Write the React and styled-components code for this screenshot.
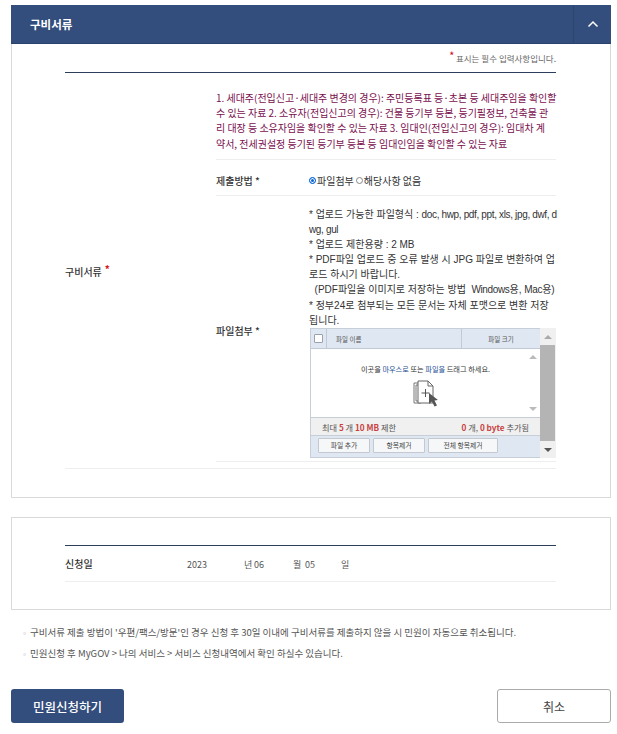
import React from 'react'
import styled, { createGlobalStyle } from 'styled-components'

const Global = createGlobalStyle`
  html, body { margin: 0; padding: 0; background: #fff; }
  body { font-family: "Noto Sans CJK KR", "Noto Sans", sans-serif; color: #333; }
  * { box-sizing: border-box; }
`

const Page = styled.div`
  width: 617px;
  height: 734px;
  overflow: hidden;
  padding: 5px 6px 0 11px;
`
const Header = styled.div`
  height: 39px;
  background: #334d7c;
  border-bottom: 1px solid #2b4270;
  display: flex;
  align-items: center;
  justify-content: space-between;
`
const HeaderTitle = styled.h2`
  margin: 0 0 0 19px;
  font-size: 11.5px;
  font-weight: 700;
  color: #fff;
`
const Toggle = styled.div`
  width: 38px;
  height: 38px;
  border-left: 1px solid #2d446f;
  display: flex;
  align-items: center;
  justify-content: center;
`
const PanelBody = styled.div`
  height: 454px;
  border: 1px solid #d9d9d9;
  border-top: 0;
  padding: 5px 54px 0 53px;
`
const Required = styled.p`
  margin: 0;
  height: 23px;
  text-align: right;
  font-size: 8.5px;
  line-height: 13px;
  color: #666;
`
const Star = styled.span`
  color: #d3172a;
  font-size: 9px;
  font-weight: 700;
  vertical-align: 3px;
  margin-right: 2px;
`
const LabelStar = styled(Star)`
  margin: 0 0 7px 1px;
  font-size: 10px;
`
const FormRow = styled.div`
  border-top: 1px solid #2c3e5a;
  border-bottom: 1px solid #eee;
  display: grid;
  grid-template-columns: 151px 340px;
  height: 397px;
`
const RowLabel = styled.div`
  display: flex;
  align-items: center;
  gap: 2px;
  padding-top: 2px;
  font-size: 10px;
  font-weight: 500;
  color: #333;
`
const Guide = styled.div`
  padding: 17px 0 6px;
  height: 87px;
  border-bottom: 1px solid #eee;
  color: #7a0f4f;
  font-size: 10px;
  line-height: 15.2px;
  letter-spacing: -0.02px;
  white-space: nowrap;
`
const SubmitRow = styled.div`
  height: 36px;
  border-bottom: 1px solid #eee;
  display: grid;
  grid-template-columns: 93px 1fr;
  align-items: center;
  padding-top: 5px;
  font-size: 10px;
`
const FileRow = styled.div`
  height: 266px;
  border-bottom: 1px solid #eee;
  display: grid;
  grid-template-columns: 93px 1fr;
  font-size: 10px;
`
const FieldName = styled.span`
  font-weight: 500;
  color: #333;
`
const FileName = styled(FieldName)`
  align-self: center;
  padding-top: 4px;
`
const Radios = styled.div`
  display: flex;
  align-items: center;
  color: #333;
`
const Radio = styled.span`
  width: 7px;
  height: 7px;
  border-radius: 50%;
  margin-right: 1px;
  margin-left: ${p => (p.$on ? 0 : 2)}px;
  border: 1px solid ${p => (p.$on ? '#0a66d8' : '#888')};
  background: ${p => (p.$on ? '#0a66d8' : '#fff')};
  box-shadow: ${p => (p.$on ? 'inset 0 0 0 1px #fff' : 'none')};
`
const FileInfo = styled.div`
  padding-top: 11px;
`
const InfoText = styled.p`
  margin: 0 0 3px;
  height: 118px;
  font-family: "Liberation Sans", "Noto Sans CJK KR", sans-serif;
  font-size: 10px;
  line-height: 15.1px;
  color: #333;
  white-space: pre;
`
const Latin = styled.span`
  letter-spacing: -0.35px;
`
const Uploader = styled.div`
  margin-left: 1px;
  width: 246px;
  height: 130px;
  display: flex;
  font-size: 6.5px;
  color: #555;
`
const UploadMain = styled.div`
  width: 230px;
  display: flex;
  flex-direction: column;
  background: #dfe7f2;
  border: 1px solid #c6ced8;
  border-right: 0;
`
const TableHead = styled.div`
  height: 20px;
  display: grid;
  grid-template-columns: 15px 135px 1fr;
  align-items: center;
  border-bottom: 1px solid #c2cad6;
`
const HeadCell = styled.div`
  height: 100%;
  display: flex;
  align-items: center;
  justify-content: ${p => (p.$center ? 'center' : 'flex-start')};
  padding-left: ${p => (p.$center ? 0 : 9)}px;
  border-left: ${p => (p.$line ? '1px solid #c2cad6' : '0')};
`
const Check = styled.span`
  width: 9px;
  height: 9px;
  margin-left: 3px;
  background: #fff;
  border: 1px solid #9aa3ad;
  border-radius: 1px;
`
const DropArea = styled.div`
  height: 69px;
  background: #fff;
  display: flex;
  border-bottom: 1px solid #c6ced8;
`
const DropText = styled.div`
  flex: 1;
  display: flex;
  flex-direction: column;
  align-items: center;
  padding: 15px 0 0 14px;
  color: #333;
  font-size: 7.2px;
  line-height: 10px;
`
const Blue = styled.span`
  color: #1c4f96;
`
const DropIcon = styled.svg`
  margin-top: 6px;
`
const MiniBar = styled.div`
  width: 14px;
  display: flex;
  flex-direction: column;
  align-items: center;
  justify-content: space-between;
  padding: 6px 0;
`
const Limits = styled.div`
  height: 18px;
  border-bottom: 1px solid #c6ced8;
  background: #f0f0f0;
  display: flex;
  align-items: center;
  justify-content: space-between;
  padding: 0 11px;
  font-size: 8.2px;
`
const Red = styled.b`
  color: #c9413f;
`
const Actions = styled.div`
  flex: 1;
  display: flex;
  align-items: center;
  gap: 3px;
  padding: 0 0 3px 7px;
`
const MiniButton = styled.button`
  width: ${p => p.$w}px;
  height: 15px;
  padding: 0;
  background: #f6f7f9;
  border: 1px solid #c4c9d0;
  border-radius: 1px;
  font: inherit;
  font-size: 6.8px;
  color: #444;
`
const Scroll = styled.div`
  width: 16px;
  display: flex;
  flex-direction: column;
  background: #f0f0f0;
`
const ScrollEnd = styled.div`
  height: 17px;
  display: flex;
  align-items: center;
  justify-content: center;
`
const Thumb = styled.div`
  flex: 1;
  margin: 0 1px 0 0;
  background: #b4b4b4;
`
const Tri = styled.span`
  width: 0;
  height: 0;
  border-left: 4px solid transparent;
  border-right: 4px solid transparent;
  ${p => (p.$down ? `border-top: 4px solid ${p.$c}` : `border-bottom: 4px solid ${p.$c}`)};
`
const DateCard = styled.div`
  margin-top: 19px;
  height: 93px;
  border: 1px solid #d9d9d9;
  padding: 27px 54px 0 53px;
`
const DateRow = styled.div`
  height: 37px;
  border-top: 1px solid #2c3e5a;
  border-bottom: 1px solid #eee;
  display: flex;
  align-items: center;
  font-size: 10px;
`
const DateLabel = styled.span`
  width: 122px;
  font-weight: 500;
`
const DatePart = styled.span`
  width: ${p => p.$w}px;
  font-size: 9px;
  color: #555;
  padding-top: 2px;
`
const Notes = styled.ul`
  list-style: none;
  margin: 12px 0 0;
  padding: 0 0 0 10px;
  font-size: 9.5px;
  line-height: 20px;
  color: #555;
`
const Note = styled.li`
  &::before {
    content: '▫';
    color: #999;
    font-size: 7px;
    margin-right: 2px;
  }
`
const Buttons = styled.div`
  margin-top: 25px;
  display: flex;
  justify-content: space-between;
`
const Submit = styled.button`
  width: 113px;
  height: 34px;
  background: #334d7c;
  border: 0;
  border-radius: 3px;
  color: #fff;
  font: inherit;
  font-size: 12.5px;
  font-weight: 500;
`
const Cancel = styled.button`
  width: 114px;
  height: 34px;
  background: #fff;
  border: 1px solid #aaa;
  border-radius: 3px;
  color: #444;
  font: inherit;
  font-size: 12px;
`

const App = () => {
  return (
    <Page>
      <Global />
      <Header>
        <HeaderTitle>구비서류</HeaderTitle>
        <Toggle>
          <svg width="12" height="8" viewBox="0 0 12 8" fill="none">
            <path d="M1.5 6.5 6 2l4.5 4.5" stroke="#fff" strokeWidth="1.5" />
          </svg>
        </Toggle>
      </Header>
      <PanelBody>
        <Required><Star>*</Star>표시는 필수 입력사항입니다.</Required>
        <FormRow>
          <RowLabel>구비서류<LabelStar>*</LabelStar></RowLabel>
          <div>
            <Guide>
              1. 세대주(전입신고·세대주 변경의 경우): 주민등록표 등·초본 등 세대주임을 확인할<br />
              수 있는 자료 2. 소유자(전입신고의 경우): 건물 등기부 등본, 등기필정보, 건축물 관<br />
              리 대장 등 소유자임을 확인할 수 있는 자료 3. 임대인(전입신고의 경우): 임대차 계<br />
              약서, 전세권설정 등기된 등기부 등본 등 임대인임을 확인할 수 있는 자료
            </Guide>
            <SubmitRow>
              <FieldName>제출방법 *</FieldName>
              <Radios>
                <Radio $on />파일첨부<Radio />해당사항 없음
              </Radios>
            </SubmitRow>
            <FileRow>
              <FileName>파일첨부 *</FileName>
              <FileInfo>
                <InfoText>
                  * 업로드 가능한 파일형식 : <Latin>doc, hwp, pdf, ppt, xls, jpg, dwf, d</Latin>{'\n'}
                  <Latin>wg, gul</Latin>{'\n'}
                  * 업로드 제한용량 : 2 MB{'\n'}
                  * PDF파일 업로드 중 오류 발생 시 JPG 파일로 변환하여 업{'\n'}
                  로드 하시기 바랍니다.{'\n'}
                  {'  '}(PDF파일을 이미지로 저장하는 방법  <Latin>Windows</Latin>용, <Latin>Mac</Latin>용){'\n'}
                  * 정부24로 첨부되는 모든 문서는 자체 포맷으로 변환 저장{'\n'}
                  됩니다.
                </InfoText>
                <Uploader>
                  <UploadMain>
                    <TableHead>
                      <Check />
                      <HeadCell $line>파일 이름</HeadCell>
                      <HeadCell $line $center>파일 크기</HeadCell>
                    </TableHead>
                    <DropArea>
                      <DropText>
                        <span>이곳을 <Blue>마우스로</Blue> 또는 <Blue>파일을</Blue> 드래그 하세요.</span>
                        <DropIcon width="26" height="28" viewBox="0 0 26 28">
                          <path d="M1 3h10l0 2H3v16h5v2H1z" fill="#fff" stroke="#777" />
                          <path d="M5 1h10l5 5v17H5z" fill="#fff" stroke="#666" />
                          <path d="M15 1v5h5" fill="none" stroke="#666" />
                          <path d="M12.5 9v8M8.5 13h8" stroke="#555" />
                          <path d="M16 13l0 11 3-2.5 2.5 5 2.5-1-2.5-5 3.5-.5z" fill="#555" />
                        </DropIcon>
                      </DropText>
                      <MiniBar>
                        <Tri $c="#bbb" />
                        <Tri $down $c="#bbb" />
                      </MiniBar>
                    </DropArea>
                    <Limits>
                      <span>최대 <Red>5</Red> 개 <Red>10 MB</Red> 제한</span>
                      <span><Red>0</Red> 개, <Red>0 byte</Red> 추가됨</span>
                    </Limits>
                    <Actions>
                      <MiniButton $w={52}>파일 추가</MiniButton>
                      <MiniButton $w={52}>항목제거</MiniButton>
                      <MiniButton $w={70}>전체 항목제거</MiniButton>
                    </Actions>
                  </UploadMain>
                  <Scroll>
                    <ScrollEnd><Tri $c="#aaa" /></ScrollEnd>
                    <Thumb />
                    <ScrollEnd><Tri $down $c="#555" /></ScrollEnd>
                  </Scroll>
                </Uploader>
              </FileInfo>
            </FileRow>
          </div>
        </FormRow>
      </PanelBody>
      <DateCard>
        <DateRow>
          <DateLabel>신청일</DateLabel>
          <DatePart $w={57}>2023</DatePart>
          <DatePart $w={10}>년</DatePart>
          <DatePart $w={39}>06</DatePart>
          <DatePart $w={12}>월</DatePart>
          <DatePart $w={36}>05</DatePart>
          <DatePart $w={20}>일</DatePart>
        </DateRow>
      </DateCard>
      <Notes>
        <Note>구비서류 제출 방법이 '우편/팩스/방문'인 경우 신청 후 30일 이내에 구비서류를 제출하지 않을 시 민원이 자동으로 취소됩니다.</Note>
        <Note>민원신청 후 MyGOV &gt; 나의 서비스 &gt; 서비스 신청내역에서 확인 하실수 있습니다.</Note>
      </Notes>
      <Buttons>
        <Submit>민원신청하기</Submit>
        <Cancel>취소</Cancel>
      </Buttons>
    </Page>
  )
}

export default App
